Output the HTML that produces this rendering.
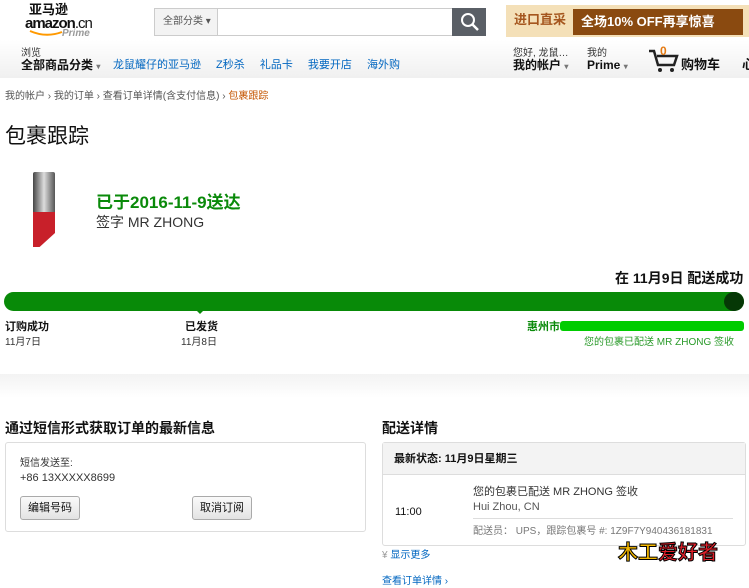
<!DOCTYPE html>
<html><head><meta charset="utf-8"><style>
*{margin:0;padding:0;box-sizing:border-box}
body{width:749px;height:580px;overflow:hidden;background:#fff;font-family:"Liberation Sans","Noto Sans CJK SC",sans-serif;color:#111;position:relative;line-height:1.3}
.a{position:absolute;white-space:nowrap}
</style></head><body>
<div class="a" style="left:0;top:40px;width:749px;height:38px;background:linear-gradient(#fff,#f0f0f0)"></div>
<div class="a" style="left:29px;top:2px;font-size:13px;font-weight:bold">亚马逊</div>
<div class="a" style="left:25px;top:14px;font-size:15px;font-weight:bold;letter-spacing:-1px">amazon<span style="font-weight:normal">.cn</span></div>
<svg class="a" style="left:28px;top:29px" width="40" height="8"><path d="M2 2 Q18 9 34 3" stroke="#f90" stroke-width="2" fill="none"/></svg>
<div class="a" style="left:62px;top:27px;font-size:10px;font-style:italic;font-weight:bold;color:#999">Prime</div>
<div class="a" style="left:154px;top:8px;width:300px;height:28px;border:1px solid #ccc;border-right:none;background:#fff"></div>
<div class="a" style="left:154px;top:8px;width:64px;height:28px;background:#f3f3f3;border:1px solid #ccc;font-size:10px;color:#555;line-height:26px;padding-left:8px">全部分类 ▾</div>
<div class="a" style="left:452px;top:8px;width:34px;height:28px;background:#5a5f66"></div>
<svg class="a" style="left:460px;top:12px" width="20" height="20"><circle cx="8" cy="8" r="6" stroke="#fff" stroke-width="2" fill="none"/><path d="M12 12 L18 18" stroke="#fff" stroke-width="2.5"/></svg>
<div class="a" style="left:506px;top:5px;width:243px;height:32px;background:#f4e0b8"></div>
<div class="a" style="left:514px;top:12px;font-size:13px;font-weight:bold;color:#a5561e">进口直采</div>
<div class="a" style="left:573px;top:9px;width:170px;height:26px;background:#8a4a10;color:#fff;font-size:13px;font-weight:bold;line-height:26px;padding-left:8px">全场10% OFF再享惊喜</div>
<div class="a" style="left:21px;top:47px;font-size:10px;color:#333">浏览</div>
<div class="a" style="left:21px;top:58px;font-size:12px;font-weight:bold">全部商品分类 <span style="font-size:8px;color:#777">▾</span></div>
<div class="a" style="left:113px;top:58px;font-size:11px;color:#0066c0;word-spacing:12px">龙鼠耀仔的亚马逊 Z秒杀 礼品卡 我要开店 海外购</div>
<div class="a" style="left:513px;top:47px;font-size:10px;color:#333">您好, 龙鼠…</div>
<div class="a" style="left:513px;top:58px;font-size:12px;font-weight:bold">我的帐户 <span style="font-size:8px;color:#777">▾</span></div>
<div class="a" style="left:587px;top:47px;font-size:10px;color:#333">我的</div>
<div class="a" style="left:587px;top:58px;font-size:12px;font-weight:bold">Prime <span style="font-size:8px;color:#777">▾</span></div>
<svg class="a" style="left:648px;top:48px" width="32" height="26"><path d="M1 3 H6 L10 17 H26 L29 8 H9" stroke="#222" stroke-width="2.5" fill="none"/><circle cx="12" cy="22" r="2" fill="#222"/><circle cx="24" cy="22" r="2" fill="#222"/></svg>
<div class="a" style="left:660px;top:44px;font-size:12px;font-weight:bold;color:#e47911">0</div>
<div class="a" style="left:681px;top:57px;font-size:13px;font-weight:bold">购物车</div>
<div class="a" style="left:742px;top:57px;font-size:13px;font-weight:bold">心</div>
<div class="a" style="left:5px;top:90px;font-size:10px;color:#555">我的帐户 › 我的订单 › 查看订单详情(含支付信息) › <span style="color:#c45500">包裹跟踪</span></div>
<div class="a" style="left:5px;top:123px;font-size:21px;color:#111">包裹跟踪</div>
<div class="a" style="left:33px;top:172px;width:22px;height:44px;background:linear-gradient(90deg,#444,#ddd,#555);border-radius:2px"></div>
<div class="a" style="left:33px;top:212px;width:22px;height:35px;background:#c8202a;clip-path:polygon(0 0,100% 0,100% 60%,30% 100%,0 100%)"></div>
<div class="a" style="left:96px;top:192px;font-size:17px;font-weight:bold;color:#0a8a0a">已于2016-11-9送达</div>
<div class="a" style="left:96px;top:213px;font-size:14px;color:#333">签字 MR ZHONG</div>
<div class="a" style="left:615px;top:269px;font-size:14px;font-weight:bold">在 11月9日 配送成功</div>
<div class="a" style="left:4px;top:292px;width:740px;height:19px;background:#088a08;border-radius:10px"></div>
<div class="a" style="left:724px;top:292px;width:20px;height:19px;background:#063806;border-radius:50%"></div>
<div class="a" style="left:196px;top:310px;width:0;height:0;border:4px solid transparent;border-top-color:#088a08"></div>
<div class="a" style="left:5px;top:320px;font-size:11px;font-weight:bold">订购成功</div>
<div class="a" style="left:5px;top:336px;font-size:10px;color:#333">11月7日</div>
<div class="a" style="left:185px;top:320px;font-size:11px;font-weight:bold">已发货</div>
<div class="a" style="left:181px;top:336px;font-size:10px;color:#333">11月8日</div>
<div class="a" style="left:527px;top:320px;font-size:11px;font-weight:bold;color:#0a8a0a">惠州市</div>
<div class="a" style="left:560px;top:321px;width:184px;height:10px;background:#0c0;border-radius:3px"></div>
<div class="a" style="left:584px;top:336px;font-size:10px;color:#2a9a2a">您的包裹已配送 MR ZHONG 签收</div>
<div class="a" style="left:0;top:374px;width:749px;height:24px;background:linear-gradient(#f3f3f3,#fff)"></div>
<div class="a" style="left:5px;top:419px;font-size:14px;font-weight:bold">通过短信形式获取订单的最新信息</div>
<div class="a" style="left:5px;top:442px;width:361px;height:90px;border:1px solid #ddd;border-radius:3px"></div>
<div class="a" style="left:20px;top:457px;font-size:10px;color:#333">短信发送至:</div>
<div class="a" style="left:20px;top:471px;font-size:11px;color:#333">+86 13XXXXX8699</div>
<div class="a" style="left:20px;top:496px;width:60px;height:24px;border:1px solid #aaa;border-radius:3px;background:linear-gradient(#fafafa,#e3e3e3);font-size:11px;line-height:22px;text-align:center">编辑号码</div>
<div class="a" style="left:192px;top:496px;width:60px;height:24px;border:1px solid #aaa;border-radius:3px;background:linear-gradient(#fafafa,#e3e3e3);font-size:11px;line-height:22px;text-align:center">取消订阅</div>
<div class="a" style="left:382px;top:419px;font-size:14px;font-weight:bold">配送详情</div>
<div class="a" style="left:382px;top:442px;width:364px;height:104px;border:1px solid #ddd;border-radius:3px"></div>
<div class="a" style="left:383px;top:443px;width:362px;height:32px;background:#f3f3f3;border-bottom:1px solid #ddd;font-size:11px;font-weight:bold;line-height:32px;padding-left:11px">最新状态: 11月9日星期三</div>
<div class="a" style="left:395px;top:505px;font-size:11px">11:00</div>
<div class="a" style="left:473px;top:485px;font-size:11px;color:#333">您的包裹已配送 MR ZHONG 签收</div>
<div class="a" style="left:473px;top:500px;font-size:11px;color:#555">Hui Zhou, CN</div>
<div class="a" style="left:473px;top:518px;width:260px;height:1px;background:#ddd"></div>
<div class="a" style="left:473px;top:525px;font-size:10px;color:#777">配送员： UPS，跟踪包裹号 #: 1Z9F7Y940436181831</div>
<div class="a" style="left:382px;top:549px;font-size:10px;color:#0066c0"><span style="color:#999">¥</span> 显示更多</div>
<div class="a" style="left:382px;top:575px;font-size:10px;color:#0066c0">查看订单详情 ›</div>
<div class="a" style="left:618px;top:540px;font-size:20px;font-weight:bold;color:#f5b800;-webkit-text-stroke:1px #000">木工<span style="color:#e0202a">爱好者</span></div>
</body></html>
